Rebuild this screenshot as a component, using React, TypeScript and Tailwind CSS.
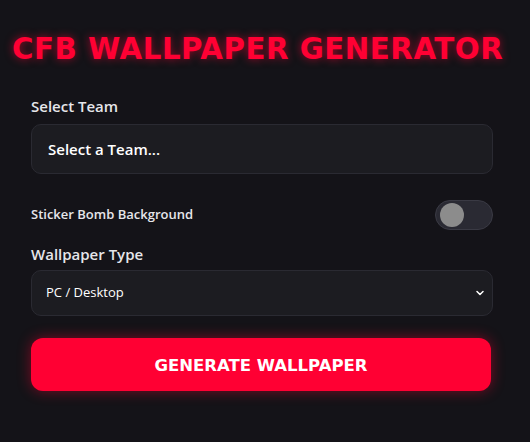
import { ChevronDown } from "lucide-react";

export default function App() {
  return (
    <div className="min-h-[442px] w-full bg-[#141318] font-['Open_Sans',sans-serif] text-[#e6e6ea]">
      <h1 className="whitespace-nowrap pl-[12px] pt-[29px] font-['DejaVu_Sans',sans-serif] text-[29.3px] font-black leading-[40px] tracking-[0.5px] text-[#ff0033] [text-shadow:0_0_8px_rgba(255,0,51,0.6)]">
        CFB WALLPAPER GENERATOR
      </h1>

      <div className="ml-[31px] mt-[27px] flex w-[462px] flex-col">
        <label className="text-[15px] font-semibold leading-5">Select Team</label>
        <div className="mt-[8px] flex h-[50px] items-center rounded-[10px] border border-[#2a2a32] bg-[#1c1c21] px-[16px] text-[15px] font-semibold text-white">
          Select a Team...
        </div>

        <div className="mt-[26px] flex items-center justify-between">
          <span className="text-[13px] font-semibold">Sticker Bomb Background</span>
          <div className="flex h-[30px] w-[58px] items-center rounded-full border border-[#3a3a44] bg-[#2a2a33] px-[4px]">
            <div className="h-[24px] w-[24px] rounded-full bg-[#8c8c8c]" />
          </div>
        </div>

        <label className="mt-[14px] text-[15px] font-semibold leading-5">Wallpaper Type</label>
        <div className="mt-[6px] flex h-[46px] items-center justify-between rounded-[10px] border border-[#2a2a32] bg-[#1c1c21] pl-[14px] pr-[6px] text-[13px] text-white">
          <span>PC / Desktop</span>
          <ChevronDown size={12} strokeWidth={3} />
        </div>

        <button className="mr-[2px] mt-[22px] h-[53px] rounded-[12px] bg-[#ff0033] pt-[3px] font-['DejaVu_Sans',sans-serif] text-[16.5px] font-bold text-white shadow-[0_0_14px_rgba(255,0,51,0.45)]">
          GENERATE WALLPAPER
        </button>
      </div>
    </div>
  );
}
